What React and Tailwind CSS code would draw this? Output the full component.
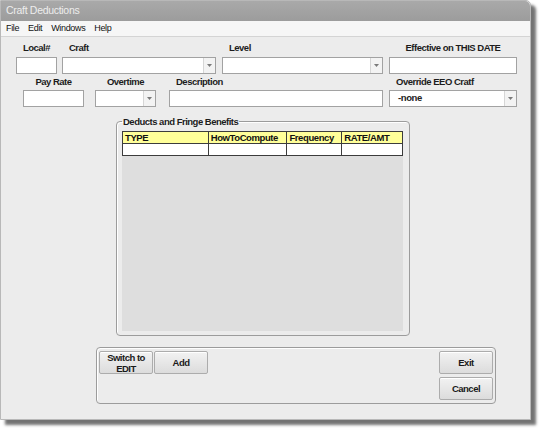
import React from 'react';

const font = { fontFamily: '"Liberation Sans", Arial, sans-serif' };

const menuItems = ['File', 'Edit', 'Windows', 'Help'];

const columns = [
  { name: 'TYPE', w: 'w-[85px]' },
  { name: 'HowToCompute', w: 'w-[79px]' },
  { name: 'Frequency', w: 'w-[55px]' },
  { name: 'RATE/AMT', w: 'w-[61px]' },
];

const TextBox = ({ className = '', children }) => (
  <div className={`h-[17px] bg-white border border-[#a2a2a2] flex items-center px-[8px] text-[9.5px] tracking-[-0.4px] font-bold text-[#222] ${className}`}>
    {children}
  </div>
);

const Combo = ({ className = '', value }) => (
  <div className={`h-[17px] bg-white border border-[#a2a2a2] flex ${className}`}>
    <div className="flex-1 flex items-center px-[8px] text-[9.5px] tracking-[-0.4px] font-bold text-[#222]">{value}</div>
    <div className="w-[12px] border-l border-[#d6d6d6] bg-[#f3f3f3] flex items-center justify-center">
      <svg width="5" height="3" viewBox="0 0 5 3">
        <path d="M0 0 L5 0 L2.5 3 Z" fill="#7a7a7a" />
      </svg>
    </div>
  </div>
);

const Field = ({ label, align = 'center', width, children }) => (
  <div className={`flex flex-col ${width}`}>
    <div className={`h-[12px] leading-[12px] text-[9.5px] tracking-[-0.5px] font-bold text-[#1c1c1c] whitespace-nowrap ${align === 'center' ? 'text-center' : 'text-left pl-[7px]'}`}>
      {label}
    </div>
    {children}
  </div>
);

const Btn = ({ children }) => (
  <button className="w-[54px] h-[23px] rounded-[2px] border border-[#acacac] bg-gradient-to-b from-[#f2f2f2] to-[#dcdcdc] text-[9.5px] tracking-[-0.5px] leading-[11px] font-bold text-[#1a1a1a] flex items-center justify-center text-center shadow-[inset_0_1px_0_#ffffff]">
    {children}
  </button>
);

export default function App() {
  return (
    <div className="w-[541px] h-[429px] bg-white" style={font}>
      <div className="w-[531px] h-[420px] bg-[#ececec] border border-[#b8b8b8] rounded-tr-[5px] shadow-[5px_5px_3px_rgba(0,0,0,0.55)] flex flex-col">
        {/* title bar */}
        <div className="h-[20px] bg-gradient-to-b from-[#a9a9a9] to-[#9c9c9c] rounded-tr-[5px] flex items-center pl-[5px] text-[10.5px] tracking-[-0.3px] text-[#ededed]">
          Craft Deductions
        </div>
        {/* menu */}
        <div className="h-[16px] bg-[#f6f6f6] border-b border-[#d4d4d4] flex items-center pl-[5px] gap-[9px] text-[9px] tracking-[-0.35px] text-[#111]">
          {menuItems.map(m => (
            <span key={m}>{m}</span>
          ))}
        </div>

        {/* first row of fields */}
        <div className="flex mt-[5px] pl-[15px]">
          <Field label="Local#" width="w-[41px]">
            <TextBox className="mt-[3px]" />
          </Field>
          <Field label="Craft" align="left" width="w-[154px] ml-[5px]">
            <Combo className="mt-[3px]" />
          </Field>
          <Field label="Level" align="left" width="w-[161px] ml-[6px]">
            <Combo className="mt-[3px]" />
          </Field>
          <Field label="Effective on THIS DATE" width="w-[128px] ml-[6px]">
            <TextBox className="mt-[3px]" />
          </Field>
        </div>

        {/* second row of fields */}
        <div className="flex mt-[2px] pl-[22px]">
          <Field label="Pay Rate" width="w-[61px]">
            <TextBox className="mt-[2px]" />
          </Field>
          <Field label="Overtime" width="w-[61px] ml-[11px]">
            <Combo className="mt-[2px]" />
          </Field>
          <Field label="Description" align="left" width="w-[214px] ml-[13px]">
            <TextBox className="mt-[2px]" />
          </Field>
          <Field label="Override EEO Cratf" align="left" width="w-[128px] ml-[6px]">
            <Combo className="mt-[2px]" value="-none" />
          </Field>
        </div>

        {/* deducts group */}
        <fieldset className="ml-[115px] mt-[8px] w-[294px] border border-[#9c9c9c] rounded-[4px] pl-[5px] pb-[4px] shadow-[inset_1px_1px_0_#ffffff]">
          <legend className="px-[1px] text-[9.5px] tracking-[-0.5px] leading-[13px] font-bold text-[#1c1c1c]">Deducts and Fringe Benefits</legend>
          <div className="mt-[3px] w-[281px] h-[200px] bg-[#dedede]">
            <div className="border border-[#3c3c3c] w-[281px] bg-white">
              <div className="flex h-[12px] bg-[#ffff99] border-b border-[#3c3c3c]">
                {columns.map((c, i) => (
                  <div
                    key={c.name}
                    className={`${c.w} ${i > 0 ? 'border-l border-[#3c3c3c]' : ''} pl-[2px] text-[9.5px] tracking-[-0.4px] leading-[11px] font-bold text-[#111]`}
                  >
                    {c.name}
                  </div>
                ))}
              </div>
              <div className="flex h-[11px]">
                {columns.map((c, i) => (
                  <div key={c.name} className={`${c.w} ${i > 0 ? 'border-l border-[#3c3c3c]' : ''}`} />
                ))}
              </div>
            </div>
          </div>
        </fieldset>

        {/* button panel */}
        <div className="ml-[95px] mt-[11px] w-[400px] h-[57px] border border-[#9c9c9c] rounded-[4px] shadow-[inset_1px_1px_0_#ffffff] flex justify-between pl-[2px] pr-[2px] pt-[3px]">
          <div className="flex gap-[1px]">
            <Btn>Switch to<br />EDIT</Btn>
            <Btn>Add</Btn>
          </div>
          <div className="flex flex-col gap-[3px]">
            <Btn>Exit</Btn>
            <Btn>Cancel</Btn>
          </div>
        </div>
      </div>
    </div>
  );
}
